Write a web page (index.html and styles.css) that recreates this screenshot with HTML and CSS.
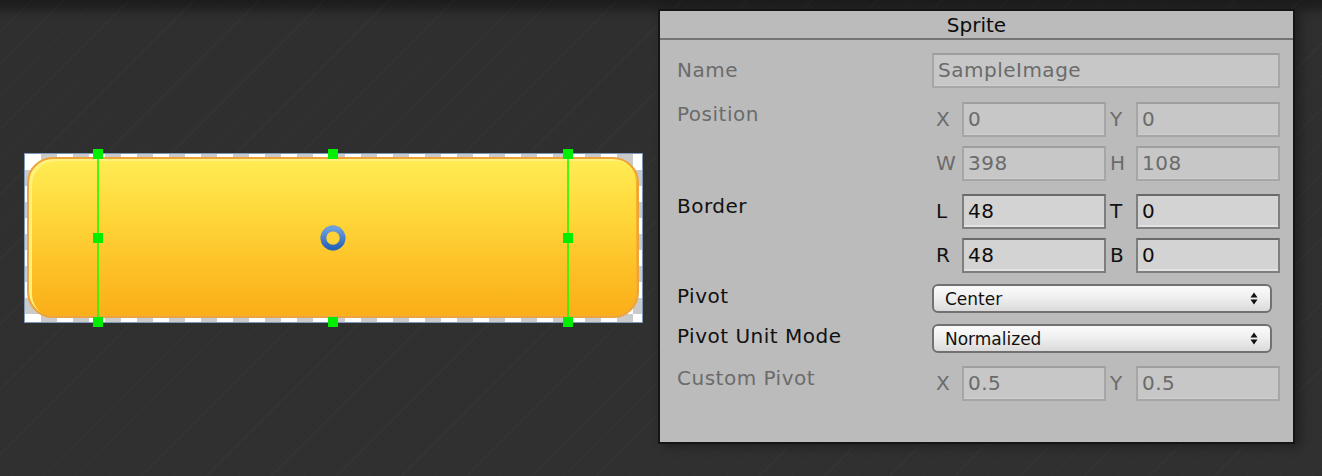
FILE: index.html
```html
<!DOCTYPE html>
<html lang="en">
<head>
<meta charset="utf-8">
<title>Sprite Editor</title>
<link rel="stylesheet" href="styles.css">
</head>
<body>
<div class="app">
  <div class="viewport">
    <div class="sprite-rect">
      <div class="sprite-btn"></div>
      <div class="border-line bl-left"></div>
      <div class="border-line bl-right"></div>
      <span class="handle hx1 hy1"></span>
      <span class="handle hx2 hy1"></span>
      <span class="handle hx3 hy1"></span>
      <span class="handle hx1 hy2"></span>
      <span class="handle hx3 hy2"></span>
      <span class="handle hx1 hy3"></span>
      <span class="handle hx2 hy3"></span>
      <span class="handle hx3 hy3"></span>
      <svg class="pivot" width="28" height="28" viewBox="0 0 28 28">
        <defs>
          <linearGradient id="pg" x1="0" y1="0" x2="0" y2="1">
            <stop offset="0" stop-color="#6c9fe0"/>
            <stop offset="1" stop-color="#2a64b8"/>
          </linearGradient>
        </defs>
        <circle cx="14" cy="14" r="12.5" fill="#3d6fb0" opacity="0.55"/>
        <circle cx="14" cy="14" r="9.6" fill="none" stroke="url(#pg)" stroke-width="5.6"/>
        <circle cx="14" cy="14" r="6.6" fill="#ffd23a"/>
      </svg>
    </div>
  </div>

  <div class="inspector">
    <div class="insp-header">Sprite</div>
    <div class="insp-body">
      <div class="row row-name">
        <div class="label label-name dim">Name</div>
        <div class="value">
          <div class="field field-dis">SampleImage</div>
        </div>
      </div>

      <div class="row row-position">
        <div class="label dim">Position</div>
        <div class="value pairs">
          <span class="axis dim">X</span><div class="field field-dis">0</div>
          <span class="axis dim">Y</span><div class="field field-dis">0</div>
          <span class="axis dim">W</span><div class="field field-dis">398</div>
          <span class="axis dim">H</span><div class="field field-dis">108</div>
        </div>
      </div>

      <div class="row row-border">
        <div class="label">Border</div>
        <div class="value pairs">
          <span class="axis">L</span><div class="field field-on">48</div>
          <span class="axis">T</span><div class="field field-on">0</div>
          <span class="axis">R</span><div class="field field-on">48</div>
          <span class="axis">B</span><div class="field field-on">0</div>
        </div>
      </div>

      <div class="row row-pivot">
        <div class="label">Pivot</div>
        <div class="value">
          <div class="dropdown"><span>Center</span>
            <svg class="updown" width="8" height="13" viewBox="0 0 8 13"><path d="M4 0.5 L7.5 5.5 L0.5 5.5 Z M0.5 7.5 L7.5 7.5 L4 12.5 Z" fill="#111"/></svg>
          </div>
        </div>
      </div>

      <div class="row row-unit">
        <div class="label">Pivot Unit Mode</div>
        <div class="value">
          <div class="dropdown"><span>Normalized</span>
            <svg class="updown" width="8" height="13" viewBox="0 0 8 13"><path d="M4 0.5 L7.5 5.5 L0.5 5.5 Z M0.5 7.5 L7.5 7.5 L4 12.5 Z" fill="#111"/></svg>
          </div>
        </div>
      </div>

      <div class="row row-custom">
        <div class="label dim">Custom Pivot</div>
        <div class="value pairs">
          <span class="axis dim">X</span><div class="field field-dis">0.5</div>
          <span class="axis dim">Y</span><div class="field field-dis">0.5</div>
        </div>
      </div>
    </div>
  </div>
</div>
</body>
</html>
```

FILE: styles.css
```css
html, body {
  margin: 0;
  padding: 0;
}

body {
  width: 1322px;
  height: 476px;
  overflow: hidden;
  font-family: "DejaVu Sans", "Liberation Sans", sans-serif;
  background:
    repeating-linear-gradient(135deg, rgba(255,255,255,0) 0 22px, rgba(255,255,255,0.018) 22px 23px),
    linear-gradient(to bottom, #1c1c1c 0, #212121 7px, #2b2b2b 14px, #2f2f2f 22px, #303030 100%);
}

.app {
  display: flex;
  align-items: flex-start;
  height: 476px;
}

/* ---------- scene view ---------- */
.viewport {
  width: 658px;
  height: 476px;
  flex: 0 0 658px;
  box-sizing: border-box;
  padding-left: 24px;
  display: flex;
  align-items: center;
}

.sprite-rect {
  position: relative;
  box-sizing: border-box;
  width: 619px;
  height: 170px;
  border: 1px solid #7d98b8;
  padding: 3px 3px 4px 2px;
  background-color: #ffffff;
  background-image:
    linear-gradient(45deg, #cacaca 25%, transparent 25%, transparent 75%, #cacaca 75%),
    linear-gradient(45deg, #cacaca 25%, transparent 25%, transparent 75%, #cacaca 75%);
  background-size: 32px 32px;
  background-position: 0 0, 16px 16px;
}

.sprite-btn {
  box-sizing: border-box;
  width: 100%;
  height: 100%;
  border-radius: 26px;
  border: 2px solid #eea43c;
  background: linear-gradient(to bottom, #ffec55 0%, #ffd83a 35%, #fdc027 70%, #fbae18 100%);
  box-shadow: inset 3px 2px 0 #fff27a, inset -1px -1px 0 #f9b02a;
}

.border-line {
  position: absolute;
  top: -1px;
  bottom: -1px;
  width: 2px;
  background: rgba(20, 255, 0, 0.8);
}
.bl-left { left: 72px; }
.bl-right { left: 542px; }

.handle {
  position: absolute;
  width: 10px;
  height: 10px;
  background: #00ee00;
}
.hx1 { left: 68px; }
.hx2 { left: 303px; }
.hx3 { left: 538px; }
.hy1 { top: -5px; }
.hy2 { top: 79px; }
.hy3 { top: 163px; }

.pivot {
  position: absolute;
  left: 294px;
  top: 70px;
}

/* ---------- inspector ---------- */
.inspector {
  margin-top: 9px;
  width: 637px;
  height: 435px;
  box-sizing: border-box;
  border: 2px solid #151515;
  background: #bbbbbb;
  box-shadow: 5px 2px 10px rgba(0,0,0,0.35);
}

.insp-header {
  height: 27px;
  line-height: 28px;
  text-align: center;
  font-size: 20px;
  color: #0c0c0c;
  border-bottom: 2px solid #747474;
}

.insp-body {
  padding: 0 13px 0 17px;
  font-size: 20px;
  letter-spacing: 0.5px;
  color: #111;
}

.row {
  display: flex;
  align-items: flex-start;
}

.row-name { margin-top: 13px; }
.row-position { margin-top: 14px; }
.row-border { margin-top: 13px; }
.row-pivot { margin-top: 11px; }
.row-unit { margin-top: 11px; }
.row-custom { margin-top: 13px; }

.label {
  width: 255px;
  flex: 0 0 255px;
  line-height: 24px;
}
.label-name { padding-top: 5px; }

.dim { color: #6b6b6b; }

.value {
  width: 348px;
}

.pairs {
  display: grid;
  grid-template-columns: 30px 144px 30px 144px;
  row-gap: 9px;
}

.axis {
  line-height: 35px;
  padding-left: 4px;
  letter-spacing: 0;
}

.field {
  box-sizing: border-box;
  height: 35px;
  line-height: 31px;
  padding-left: 4px;
  white-space: nowrap;
  overflow: hidden;
}

.field-dis {
  background: #c7c7c7;
  border: 2px solid #a6a6a6;
  border-top-color: #9e9e9e;
  box-shadow: inset 0 -1px 0 #cfcfcf;
  color: #6b6b6b;
}

.field-on {
  background: #d3d3d3;
  border: 2px solid #7e7e7e;
  border-top-color: #6a6a6a;
  box-shadow: inset 0 -2px 0 #e2e2e2;
  color: #0e0e0e;
}

.dropdown {
  box-sizing: border-box;
  width: 340px;
  height: 29px;
  border: 2px solid #717171;
  border-radius: 6px;
  background: linear-gradient(to bottom, #fbfbfb 0%, #f0f0f0 45%, #dadada 100%);
  display: flex;
  align-items: center;
  justify-content: space-between;
  padding: 0 12px 0 11px;
  font-size: 17px;
  letter-spacing: 0;
  color: #111;
}

.updown {
  display: block;
}
```
